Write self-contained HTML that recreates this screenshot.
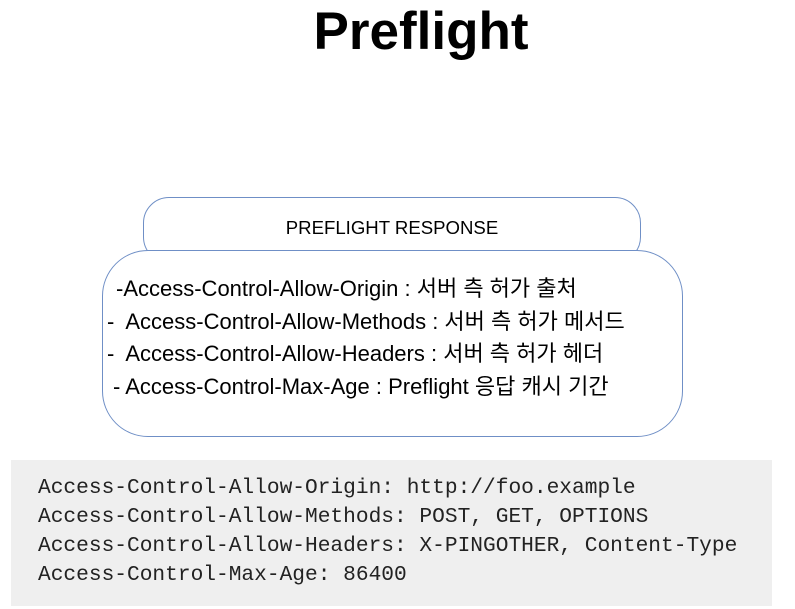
<!DOCTYPE html>
<html><head><meta charset="utf-8"><style>
body{margin:0;width:795px;height:609px;background:#fff;position:relative;overflow:hidden;font-family:"Liberation Sans","Noto Sans CJK KR",sans-serif}
.t{position:absolute;left:0;width:842px;text-align:center;top:2px;font-weight:bold;font-size:53px;line-height:60px;color:#000}
.b1{position:absolute;left:143px;top:197px;width:496px;height:64px;border:1.5px solid #6f8fc6;border-radius:26px;background:#fff}
.b1 span{position:absolute;left:0;right:0;top:19px;text-align:center;font-size:18.6px}
.b2{position:absolute;left:102px;top:250px;width:579px;height:185px;border:1.5px solid #6f8fc6;border-radius:46px;background:#fff}
.l{position:absolute;font-size:22px;white-space:pre;color:#000;line-height:24px}
.code{position:absolute;left:11px;top:460px;width:761px;height:146px;background:#efefef}
.c{position:absolute;left:38px;font-family:"Liberation Mono",monospace;font-size:21.2px;color:#222;white-space:pre;line-height:24px}
</style></head><body>
<div class="t">Preflight</div>
<div class="b1"><span>PREFLIGHT RESPONSE</span></div>
<div class="b2"></div>
<div class="l" style="left:116px;top:277px">-Access-Control-Allow-Origin : 서버 측 허가 출처</div>
<div class="l" style="left:107px;top:310px">-  Access-Control-Allow-Methods : 서버 측 허가 메서드</div>
<div class="l" style="left:107px;top:342px">-  Access-Control-Allow-Headers : 서버 측 허가 헤더</div>
<div class="l" style="left:113px;top:375px">- Access-Control-Max-Age : Preflight 응답 캐시 기간</div>
<div class="code"></div>
<div class="c" style="top:476px">Access-Control-Allow-Origin: http://foo.example</div>
<div class="c" style="top:505px">Access-Control-Allow-Methods: POST, GET, OPTIONS</div>
<div class="c" style="top:534px">Access-Control-Allow-Headers: X-PINGOTHER, Content-Type</div>
<div class="c" style="top:563px">Access-Control-Max-Age: 86400</div>
</body></html>
